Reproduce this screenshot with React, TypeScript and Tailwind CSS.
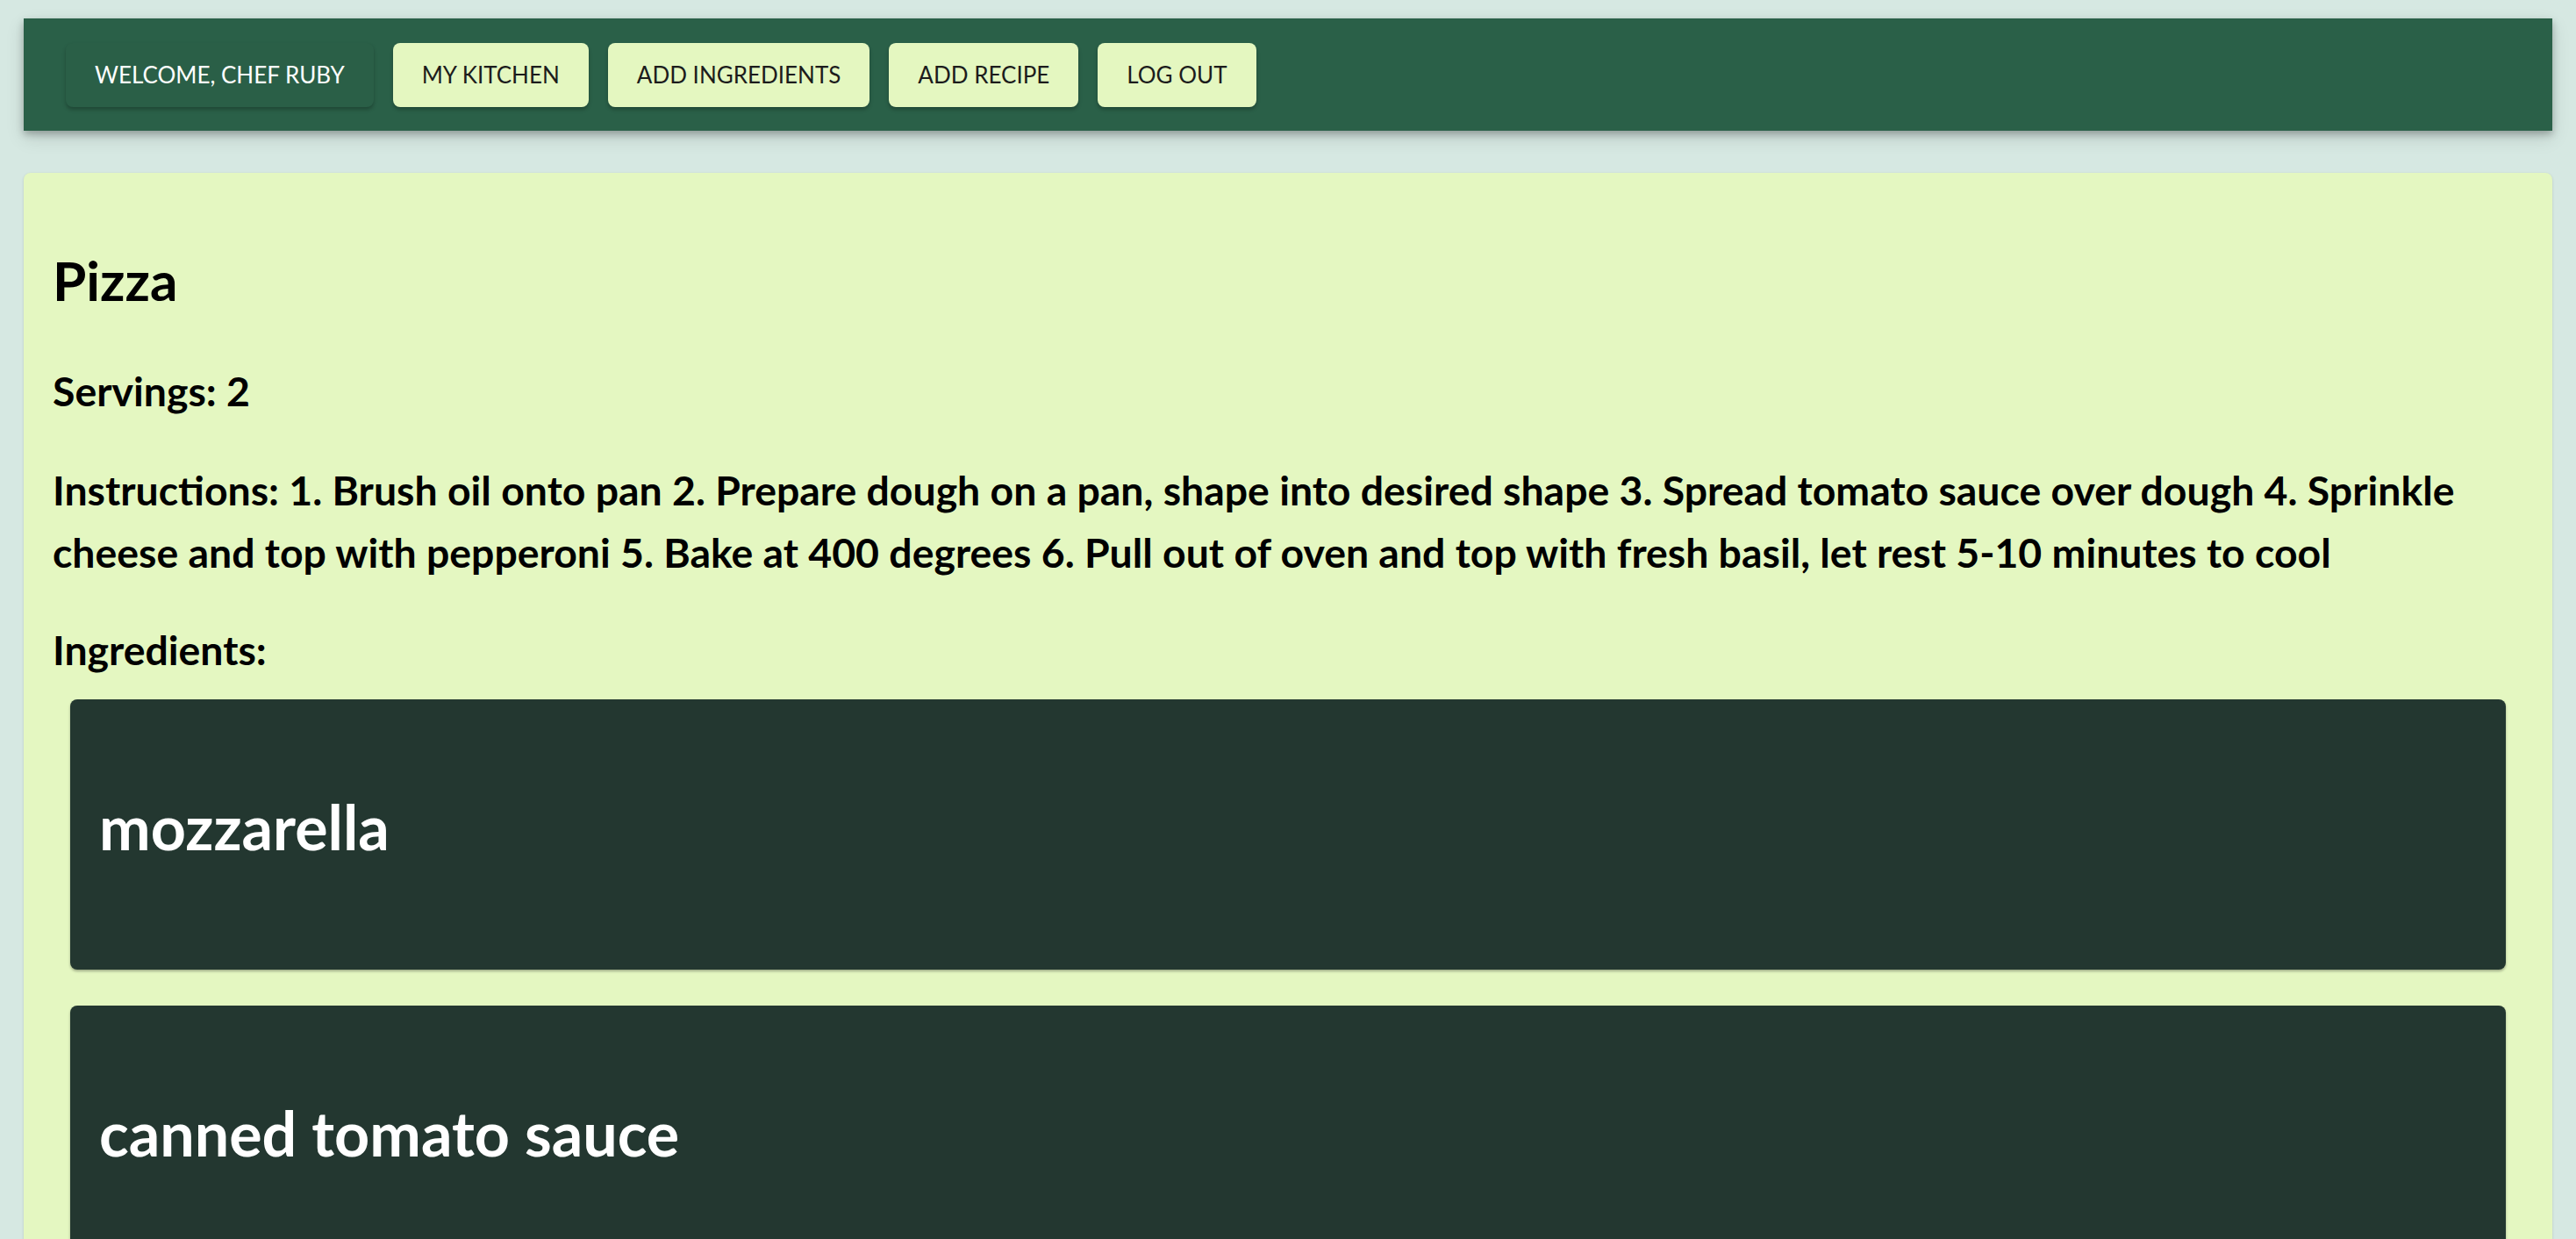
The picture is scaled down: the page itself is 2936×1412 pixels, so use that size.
import React from "react";

const navButtons = ["MY KITCHEN", "ADD INGREDIENTS", "ADD RECIPE", "LOG OUT"];
const ingredients = ["mozzarella", "canned tomato sauce"];

export default function App() {
  return (
    <div
      className="min-h-screen bg-[#d6e8e2] px-[27px] pt-[21px] pb-[40px]"
      style={{ fontFamily: "Lato, 'Noto Sans', sans-serif" }}
    >
      <nav className="h-[128px] bg-[#2a6048] px-[48px] flex items-center gap-[22px] shadow-[0_4px_8px_rgba(0,0,0,0.25),0_8px_20px_rgba(0,0,0,0.12)]">
        <button className="h-[73px] px-[33px] rounded-[8px] bg-[#2a5f47] text-white text-[26px] uppercase shadow-[0_3px_4px_rgba(0,0,0,0.25)]">
          WELCOME, CHEF RUBY
        </button>
        {navButtons.map((b) => (
          <button
            key={b}
            className="h-[73px] px-[33px] rounded-[8px] bg-[#e4f7c0] text-[#1c1c1c] text-[26px] uppercase shadow-[0_3px_4px_rgba(0,0,0,0.25)]"
          >
            {b}
          </button>
        ))}
      </nav>

      <main className="mt-[48px] bg-[#e4f7c1] rounded-[8px] px-[33px] pt-[85px] pb-[40px] shadow-[0_1px_3px_rgba(0,0,0,0.15)] text-black font-bold">
        <h1 className="text-[62px] leading-[74px] font-bold">Pizza</h1>
        <p className="mt-[54px] text-[46.4px] leading-[71px]">Servings: 2</p>
        <p className="mt-[42px] text-[46.4px] leading-[71px]">
          Instructions: 1. Brush oil onto pan 2. Prepare dough on a pan, shape into desired shape 3. Spread tomato sauce over dough 4. Sprinkle cheese and top with pepperoni 5. Bake at 400 degrees 6. Pull out of oven and top with fresh basil, let rest 5-10 minutes to cool
        </p>
        <p className="mt-[40px] text-[46.4px] leading-[71px]">Ingredients:</p>
        <div className="mt-[21px] px-[20px] flex flex-col gap-[41px]">
          {ingredients.map((i) => (
            <div
              key={i}
              className="h-[308px] bg-[#233730] rounded-[8px] px-[33px] pt-[103px] shadow-[0_2px_3px_rgba(0,0,0,0.3)]"
            >
              <h3 className="text-white text-[70px] leading-[84px] font-bold">{i}</h3>
            </div>
          ))}
        </div>
      </main>
    </div>
  );
}
